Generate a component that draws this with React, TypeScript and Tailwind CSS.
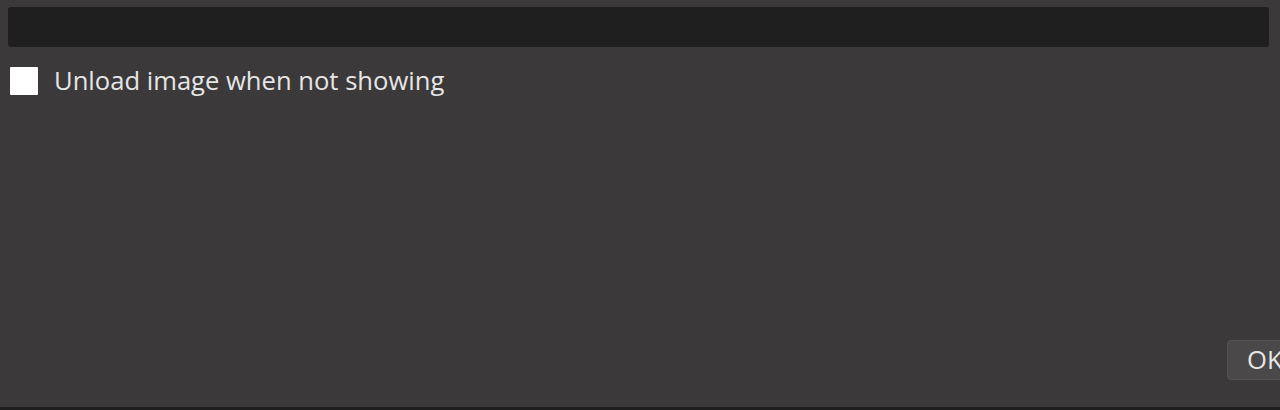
export default function App() {
  return (
    <div className="w-[1280px] h-[410px] bg-[#3b393a] flex flex-col overflow-hidden" style={{ fontFamily: '"Open Sans", "Noto Sans", sans-serif' }}>
      <div className="px-2 pt-[7px]">
        <div className="h-[40px] rounded-[3px] bg-[#201f20] w-[1261px]" />
      </div>
      <div className="flex items-center pl-[10px] mt-[20px] h-[28px]">
        <div className="w-[28px] h-[28px] bg-white rounded-[1px]" />
        <span className="ml-[16px] text-[25.6px] leading-none text-[#e6e6e6]">Unload image when not showing</span>
      </div>
      <div className="flex-1" />
      <div className="flex justify-end">
        <div className="ml-auto w-[70px] mr-[-17px] h-[40px] rounded-[4px] bg-[#4a4848] border border-[#525050] flex items-center pl-[19px] text-[25.6px] text-[#e6e6e6]">OK</div>
      </div>
      <div className="h-[27px]" />
      <div className="h-[3px] bg-[#1f1e1f]" />
    </div>
  );
}
